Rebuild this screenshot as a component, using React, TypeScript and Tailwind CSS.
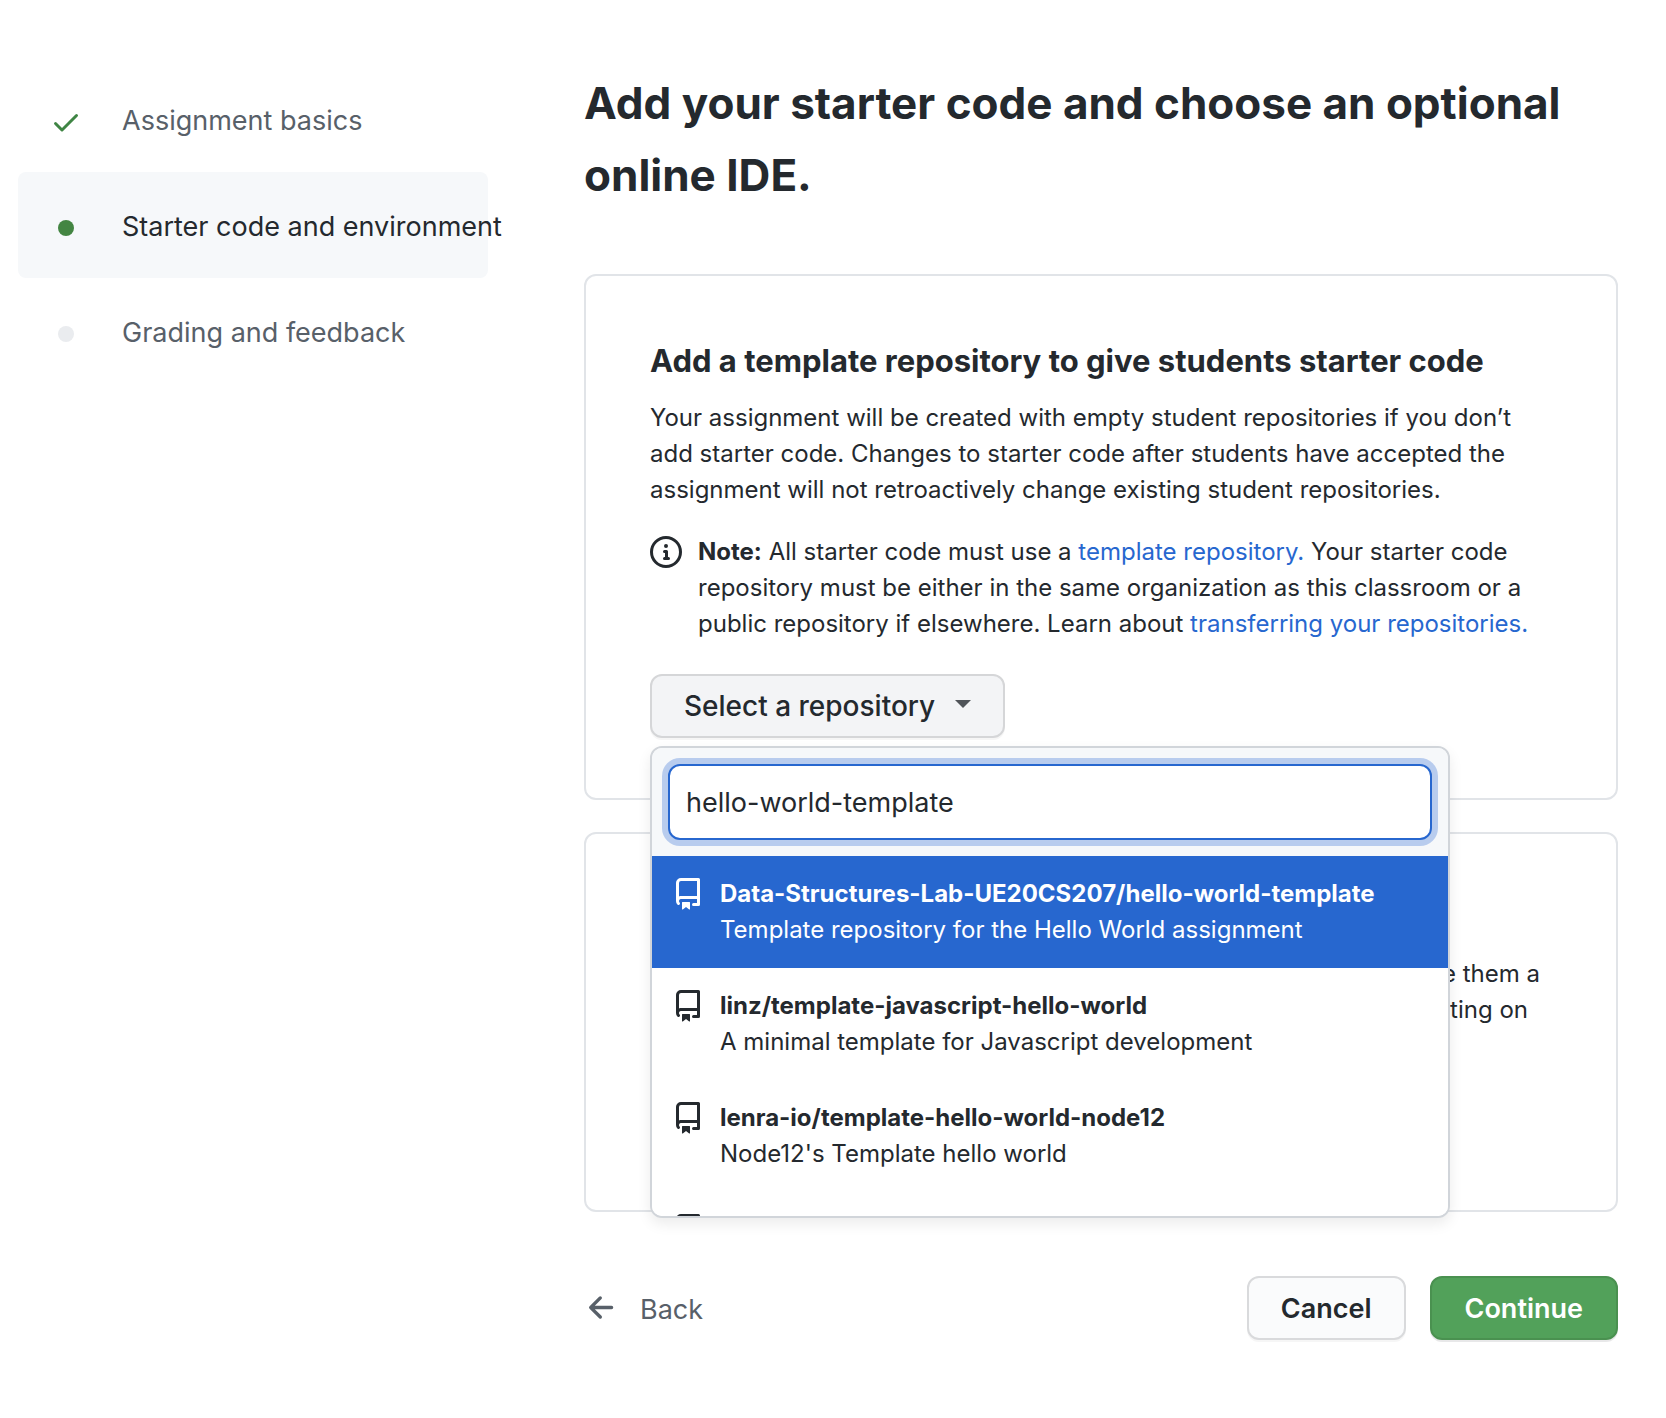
import React from "react";

type IconProps = { className?: string };

function Octicon({ d, className }: { d: string; className?: string }) {
  return (
    <svg viewBox="0 0 16 16" fill="currentColor" fillRule="evenodd" aria-hidden="true" className={className}>
      <path d={d} />
    </svg>
  );
}

const CheckIcon = ({ className }: IconProps) => (
  <Octicon
    className={className}
    d="M13.78 4.22a.75.75 0 010 1.06l-7.25 7.25a.75.75 0 01-1.06 0L2.22 9.28a.75.75 0 011.06-1.06L6 10.94l6.72-6.72a.75.75 0 011.06 0z"
  />
);

const RepoIcon = ({ className }: IconProps) => (
  <Octicon
    className={className}
    d="M2 2.5A2.5 2.5 0 014.5 0h8.75a.75.75 0 01.75.75v12.5a.75.75 0 01-.75.75h-2.5a.75.75 0 110-1.5h1.75v-2h-8a1 1 0 00-.714 1.7.75.75 0 01-1.072 1.05A2.495 2.495 0 012 11.5v-9zm10.5-1V9h-8c-.356 0-.694.074-1 .208V2.5a1 1 0 011-1h8zM5 12.25v3.25a.25.25 0 00.4.2l1.45-1.087a.25.25 0 01.3 0L8.6 15.7a.25.25 0 00.4-.2v-3.25a.25.25 0 00-.25-.25h-3.5a.25.25 0 00-.25.25z"
  />
);

const InfoIcon = ({ className }: IconProps) => (
  <Octicon
    className={className}
    d="M8 1.5a6.5 6.5 0 100 13 6.5 6.5 0 000-13zM0 8a8 8 0 1116 0A8 8 0 010 8zm6.5-.25A.75.75 0 017.25 7h1a.75.75 0 01.75.75v2.75h.25a.75.75 0 010 1.5h-2a.75.75 0 010-1.5h.25v-2h-.25a.75.75 0 01-.75-.75zM8 6a1 1 0 100-2 1 1 0 000 2z"
  />
);

const ArrowLeftIcon = ({ className }: IconProps) => (
  <Octicon
    className={className}
    d="M7.78 12.53a.75.75 0 01-1.06 0L2.47 8.28a.75.75 0 010-1.06l4.25-4.25a.75.75 0 011.06 1.06L4.81 7h7.44a.75.75 0 010 1.5H4.81l2.97 2.97a.75.75 0 010 1.06z"
  />
);

const repositories = [
  {
    name: "Data-Structures-Lab-UE20CS207/hello-world-template",
    description: "Template repository for the Hello World assignment",
    selected: true,
  },
  {
    name: "linz/template-javascript-hello-world",
    description: "A minimal template for Javascript development",
    selected: false,
  },
  {
    name: "lenra-io/template-hello-world-node12",
    description: "Node12's Template hello world",
    selected: false,
  },
  { name: "", description: "", selected: false },
];

function Steps() {
  return (
    <nav aria-label="Assignment steps" className="mt-[66px] ml-[18px] w-[470px] shrink-0">
      <ol className="text-[27px] leading-[42px] whitespace-nowrap text-[#586069]">
        <li className="flex h-[106px] items-center pt-1">
          <span className="flex w-24 shrink-0 justify-center pt-0.5">
            <CheckIcon className="size-8 text-[#3f8544]" />
          </span>
          <a href="#basics" className="ml-2">Assignment basics</a>
        </li>
        <li className="flex h-[106px] items-center rounded-lg bg-[#f6f8fa] pt-1 text-[#24292e]" aria-current="step">
          <span className="flex w-24 shrink-0 justify-center pt-0.5">
            <span className="size-4 rounded-full bg-[#438542]" />
          </span>
          <a href="#starter" className="ml-2">Starter code and environment</a>
        </li>
        <li className="flex h-[106px] items-center pt-1">
          <span className="flex w-24 shrink-0 justify-center pt-0.5">
            <span className="size-4 rounded-full bg-[#eaecef]" />
          </span>
          <a href="#grading" className="ml-2">Grading and feedback</a>
        </li>
      </ol>
    </nav>
  );
}

function RepositoryMenu() {
  return (
    <div className="absolute top-full left-0 z-10 mt-2 h-[472px] w-[800px] overflow-hidden rounded-xl border-2 border-[#d1d5da] bg-white shadow-[0_6px_14px_rgba(0,0,0,0.08)]">
      <div className="bg-[#f6f8fa] p-4">
        <input
          type="text"
          aria-label="Search for a repository"
          defaultValue="hello-world-template"
          className="block h-[76px] w-full rounded-xl border-2 border-[#2767cf] bg-white px-4 text-[27px] text-[#24292e] ring-6 ring-[#b8ccee] outline-none"
        />
      </div>
      <ul>
        {repositories.map((repo, index) => (
          <li key={index}>
            <button
              type="button"
              className={
                repo.selected
                  ? "flex h-28 w-full items-start gap-4 bg-[#2767cf] px-5 pt-5 text-left text-white"
                  : "flex h-28 w-full items-start gap-4 bg-white px-5 pt-5 text-left text-[#24292e]"
              }
            >
              <RepoIcon className="mt-0.5 size-8 shrink-0" />
              <span className="block text-[24px] leading-9 whitespace-nowrap">
                <strong className="block font-bold">{repo.name}</strong>
                <span className="block">{repo.description}</span>
              </span>
            </button>
          </li>
        ))}
      </ul>
    </div>
  );
}

export default function App() {
  return (
    <div className="flex min-h-screen bg-white font-['Inter',sans-serif] text-[#24292e]">
      <Steps />
      <main className="mt-[67px] mr-12 ml-24 min-w-0 flex-1">
        <h1 className="text-[44px] leading-[72px] font-bold">
          Add your starter code and choose an optional online IDE.
        </h1>

        <section className="mt-[63px] rounded-xl border-2 border-[#e1e4e8] px-16 pt-16 pb-[60px]">
          <h2 className="text-[31px] leading-[42px] font-bold">
            Add a template repository to give students starter code
          </h2>
          <p className="mt-[18px] text-[24px] leading-9">
            Your assignment will be created with empty student repositories if you don’t add starter code. Changes to
            starter code after students have accepted the assignment will not retroactively change existing student
            repositories.
          </p>
          <div className="mt-[26px] flex items-start gap-4">
            <InfoIcon className="mt-0.5 size-8 shrink-0" />
            <p className="text-[24px] leading-9">
              <strong className="font-bold">Note:</strong> All starter code must use a{" "}
              <a href="#template" className="text-[#2767cf]">template repository.</a> Your starter code repository must
              be either in the same organization as this classroom or a public repository if elsewhere. Learn about{" "}
              <a href="#transfer" className="text-[#2767cf]">transferring your repositories.</a>
            </p>
          </div>
          <div className="relative mt-8 w-fit">
            <button
              type="button"
              aria-expanded="true"
              className="flex h-16 items-center rounded-xl border-2 border-[#d5d6d8] bg-[#f3f4f6] px-8 text-[28px] font-medium shadow-[0_2px_0_rgba(27,31,35,0.04)]"
            >
              Select a repository
              <span className="mb-1 ml-5 border-x-8 border-t-8 border-x-transparent border-t-[#505459]" />
            </button>
            <RepositoryMenu />
          </div>
        </section>

        <section className="mt-8 h-[380px] rounded-xl border-2 border-[#e1e4e8] pt-[122px] pr-19 pl-16">
          <p className="flex flex-col items-end text-[24px] leading-9">
            <span>give them a</span>
            <span className="pr-3">starting on</span>
          </p>
        </section>

        <footer className="mt-16 flex items-center text-[27px]">
          <a href="#back" className="flex items-center gap-5 text-[#586069]">
            <ArrowLeftIcon className="size-9" />
            <span className="pt-1">Back</span>
          </a>
          <button
            type="button"
            className="ml-auto h-16 rounded-xl border-2 border-[#d9dadc] bg-[#fafbfc] px-8 pt-0.5 font-semibold shadow-[0_2px_0_rgba(27,31,35,0.04)]"
          >
            Cancel
          </button>
          <button
            type="button"
            className="ml-6 h-16 rounded-xl border-2 border-[#4a9150] bg-[#52a15a] px-[33px] pt-0.5 font-semibold text-white shadow-[0_2px_0_rgba(27,31,35,0.1)]"
          >
            Continue
          </button>
        </footer>
      </main>
    </div>
  );
}
